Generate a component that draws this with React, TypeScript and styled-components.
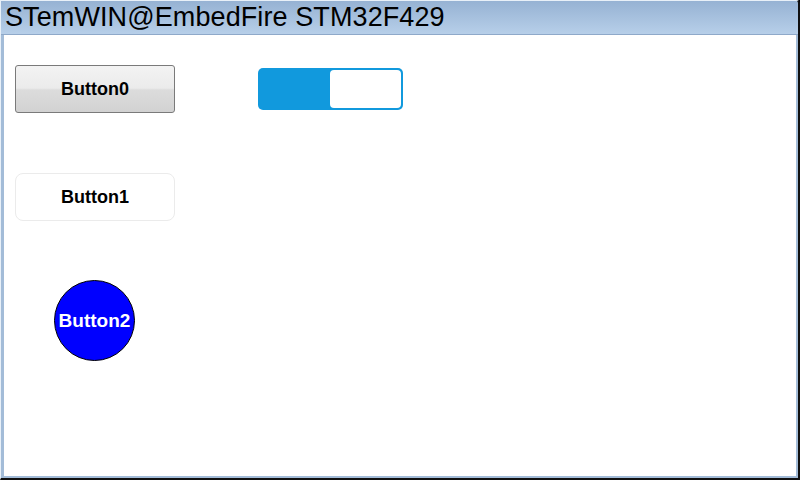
import React from "react";
import styled, { createGlobalStyle } from "styled-components";

const Global = createGlobalStyle`
  html, body { margin: 0; padding: 0; background: #000; }
  body { width: 800px; height: 480px; overflow: hidden; font-family: "Liberation Sans", Arial, sans-serif; }
`;

const Frame = styled.div`
  box-sizing: border-box;
  width: 800px;
  height: 480px;
  background: #a3bcd8;
  border-top: 1px solid #e8f0f8;
  border-left: 1px solid #e8f0f8;
  border-right: 2px solid #101010;
  border-bottom: 2px solid #101010;
  border-top-right-radius: 4px;
  display: flex;
  flex-direction: column;
  padding: 0 2px 2px 3px;
`;

const TitleBar = styled.div`
  height: 33px;
  margin: 0 -2px 0 -3px;
  padding-left: 4px;
  background: linear-gradient(#96b2d3, #b7cfe9);
  border-bottom: 1px solid #8fa9c9;
  border-top-right-radius: 4px;
  display: flex;
  align-items: center;
  font-size: 27px;
  letter-spacing: 0.1px;
  line-height: 1;
  color: #000;
  white-space: nowrap;
`;

const Client = styled.div`
  flex: 1;
  background: #fff;
  position: relative;
  display: grid;
  grid-template-columns: 160px 160px;
  column-gap: 83px;
  padding: 30px 0 0 11px;
  align-content: start;
`;

const Column = styled.div`
  display: flex;
  flex-direction: column;
  align-items: flex-start;
`;

const Btn = styled.div<{ $variant: "classic" | "flat" }>`
  box-sizing: border-box;
  width: 160px;
  height: 48px;
  display: flex;
  align-items: center;
  justify-content: center;
  font-weight: bold;
  font-size: 18px;
  color: #000;
  ${(p) =>
    p.$variant === "classic"
      ? `border: 1px solid #7a7a7a; border-radius: 3px;
         background: linear-gradient(#f3f3f3 0%, #ebebeb 48%, #dcdcdc 52%, #d2d2d2 100%);`
      : `border: 1px solid #ebebeb; border-radius: 8px; background: #fff;`}
`;

const RoundBtn = styled.div`
  box-sizing: border-box;
  width: 81px;
  height: 81px;
  border-radius: 50%;
  background: #0000ff;
  border: 1px solid #000;
  color: #fff;
  font-weight: bold;
  font-size: 19px;
  display: flex;
  align-items: center;
  justify-content: center;
  margin-left: 39px;
  white-space: nowrap;
`;

const Switch = styled.div`
  box-sizing: border-box;
  width: 145px;
  height: 42px;
  margin-top: 3px;
  background: #1199dd;
  border-radius: 5px;
  padding: 2px;
  display: flex;
  justify-content: flex-end;
`;

const Knob = styled.div`
  width: 71px;
  background: #fff;
  border-radius: 4px;
`;

const Spacer = styled.div<{ $h: number }>`
  height: ${(p) => p.$h}px;
`;

export default function App() {
  return (
    <>
      <Global />
      <Frame>
        <TitleBar>STemWIN@EmbedFire STM32F429</TitleBar>
        <Client>
          <Column>
            <Btn $variant="classic">Button0</Btn>
            <Spacer $h={60} />
            <Btn $variant="flat">Button1</Btn>
            <Spacer $h={59} />
            <RoundBtn>Button2</RoundBtn>
          </Column>
          <Column>
            <Switch>
              <Knob />
            </Switch>
          </Column>
        </Client>
      </Frame>
    </>
  );
}
